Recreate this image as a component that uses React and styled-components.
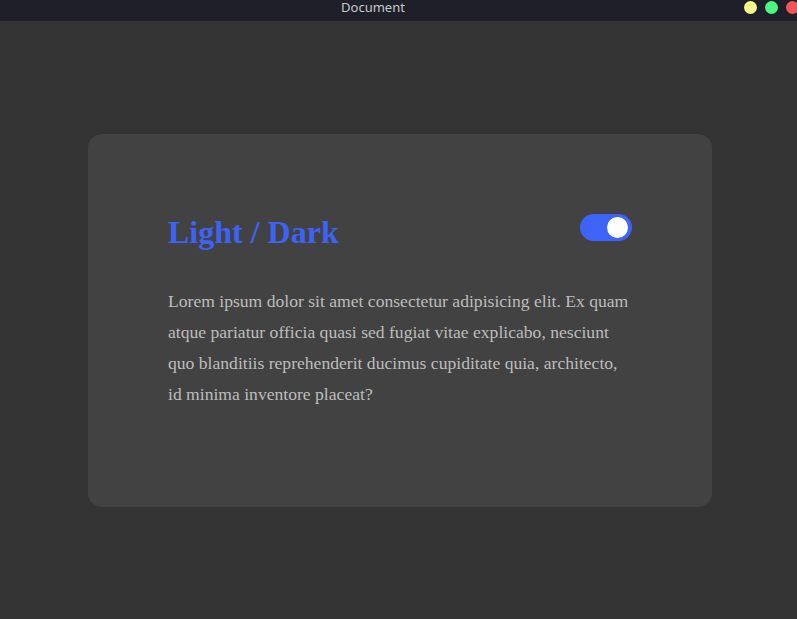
import React, { useState } from "react";
import styled, { createGlobalStyle } from "styled-components";

const Global = createGlobalStyle`
  html, body { margin: 0; padding: 0; }
  body {
    width: 797px;
    height: 619px;
    overflow: hidden;
    background: #333333;
    font-family: "Liberation Serif", "Times New Roman", serif;
  }
`;

const Window = styled.div`
  display: flex;
  flex-direction: column;
  width: 797px;
  height: 619px;
`;

const TitleBar = styled.div`
  display: flex;
  align-items: flex-start;
  height: 21px;
  background: #1e1f29;
  overflow: hidden;
  flex-shrink: 0;
`;

const TitleText = styled.div`
  flex: 1;
  text-align: center;
  font-family: "Noto Sans", "Open Sans", sans-serif;
  font-size: 13px;
  line-height: 15px;
  color: #c8c8cc;
  padding-left: 2px;
`;

const Dots = styled.div`
  display: flex;
  gap: 8px;
  margin-top: 1px;
  margin-right: -2px;
`;

const Dot = styled.span`
  width: 13px;
  height: 13px;
  border-radius: 50%;
  background: ${(p) => p.$color};
`;

const Stage = styled.div`
  flex: 1;
  display: flex;
  align-items: center;
  padding-left: 88px;
`;

const Card = styled.div`
  box-sizing: border-box;
  width: 624px;
  height: 373px;
  background: #424242;
  border-radius: 14px;
  padding: 80px 80px 0 80px;
`;

const Header = styled.div`
  display: flex;
  justify-content: space-between;
  align-items: flex-start;
  margin-bottom: 35px;
`;

const Title = styled.h1`
  margin: 0;
  font-size: 32px;
  font-weight: 700;
  color: #3d63f5;
  line-height: normal;
`;

const Switch = styled.button`
  position: relative;
  width: 52px;
  height: 27px;
  border: none;
  padding: 0;
  border-radius: 14px;
  background: ${(p) => (p.$on ? "#3d63f7" : "#777")};
  cursor: pointer;
`;

const Knob = styled.span`
  position: absolute;
  top: 3px;
  left: ${(p) => (p.$on ? "27px" : "4px")};
  width: 21px;
  height: 21px;
  border-radius: 50%;
  background: #ffffff;
`;

const Text = styled.p`
  margin: 0;
  font-size: 17.6px;
  line-height: 31px;
  color: #bdbdbd;
`;

export default function App() {
  const [on, setOn] = useState(true);
  return (
    <>
      <Global />
      <Window>
        <TitleBar>
          <TitleText>Document</TitleText>
          <Dots>
            <Dot $color="#f3f98a" />
            <Dot $color="#4cf57d" />
            <Dot $color="#f55454" />
          </Dots>
        </TitleBar>
        <Stage>
          <Card>
            <Header>
              <Title>Light / Dark</Title>
              <Switch $on={on} onClick={() => setOn(!on)} aria-label="toggle theme">
                <Knob $on={on} />
              </Switch>
            </Header>
            <Text>
              Lorem ipsum dolor sit amet consectetur adipisicing elit. Ex quam
              atque pariatur officia quasi sed fugiat vitae explicabo, nesciunt
              quo blanditiis reprehenderit ducimus cupiditate quia, architecto,
              id minima inventore placeat?
            </Text>
          </Card>
        </Stage>
      </Window>
    </>
  );
}
